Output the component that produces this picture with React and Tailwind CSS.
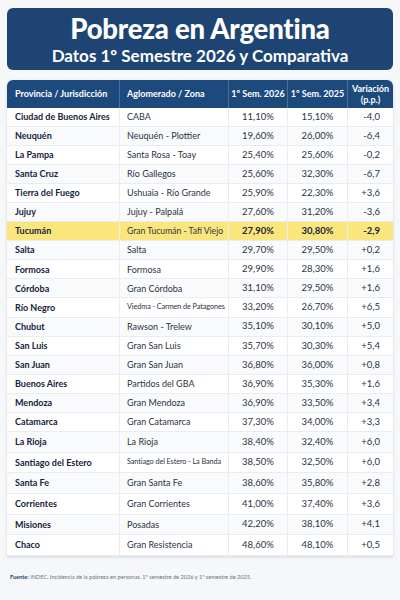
const rows = [
  ["Ciudad de Buenos Aires", "CABA", "11,10%", "15,10%", "-4,0"],
  ["Neuquén", "Neuquén - Plottier", "19,60%", "26,00%", "-6,4"],
  ["La Pampa", "Santa Rosa - Toay", "25,40%", "25,60%", "-0,2"],
  ["Santa Cruz", "Río Gallegos", "25,60%", "32,30%", "-6,7"],
  ["Tierra del Fuego", "Ushuaia - Río Grande", "25,90%", "22,30%", "+3,6"],
  ["Jujuy", "Jujuy - Palpalá", "27,60%", "31,20%", "-3,6"],
  ["Tucumán", "Gran Tucumán - Tafí Viejo", "27,90%", "30,80%", "-2,9", true],
  ["Salta", "Salta", "29,70%", "29,50%", "+0,2"],
  ["Formosa", "Formosa", "29,90%", "28,30%", "+1,6"],
  ["Córdoba", "Gran Córdoba", "31,10%", "29,50%", "+1,6"],
  ["Río Negro", "Viedma - Carmen de Patagones", "33,20%", "26,70%", "+6,5"],
  ["Chubut", "Rawson - Trelew", "35,10%", "30,10%", "+5,0"],
  ["San Luis", "Gran San Luis", "35,70%", "30,30%", "+5,4"],
  ["San Juan", "Gran San Juan", "36,80%", "36,00%", "+0,8"],
  ["Buenos Aires", "Partidos del GBA", "36,90%", "35,30%", "+1,6"],
  ["Mendoza", "Gran Mendoza", "36,90%", "33,50%", "+3,4"],
  ["Catamarca", "Gran Catamarca", "37,30%", "34,00%", "+3,3"],
  ["La Rioja", "La Rioja", "38,40%", "32,40%", "+6,0"],
  ["Santiago del Estero", "Santiago del Estero - La Banda", "38,50%", "32,50%", "+6,0"],
  ["Santa Fe", "Gran Santa Fe", "38,60%", "35,80%", "+2,8"],
  ["Corrientes", "Gran Corrientes", "41,00%", "37,40%", "+3,6"],
  ["Misiones", "Posadas", "42,20%", "38,10%", "+4,1"],
  ["Chaco", "Gran Resistencia", "48,60%", "48,10%", "+0,5"],
];

const cols = "grid grid-cols-[112px_109px_59px_60px_46px]";

function Row({ r, i }) {
  const hi = r[5];
  const bg = hi ? "bg-[#fbe67e]" : i % 2 ? "bg-[#f9fafc]" : "bg-white";
  // rows get a little taller towards the bottom, as in the picture
  const h = i < 5 ? "h-[19px]" : i < 17 ? "h-[19.1px]" : "h-[20.6px]";
  const cell = `flex items-center ${h} border-b border-[#e9edf2]`;
  const strong = hi ? "font-bold text-[#15233b]" : "";
  const zone = r[1].length > 26 ? "text-[7.3px] tracking-[-0.1px]" : r[1].length > 22 ? "text-[8.6px]" : "text-[9px]";
  return (
    <div className={`${cols} ${bg} text-[9.5px] text-[#2b3442]`}>
      <div className={`${cell} pl-2 font-bold text-[9px] text-[#15233b]`}>{r[0]}</div>
      <div className={`${cell} pl-[7px] border-l whitespace-nowrap ${zone}`}>{r[1]}</div>
      <div className={`${cell} justify-center border-l ${strong}`}>{r[2]}</div>
      <div className={`${cell} justify-center border-l ${strong}`}>{r[3]}</div>
      <div className={`${cell} justify-end pr-[13px] border-l ${strong}`}>{r[4]}</div>
    </div>
  );
}

export default function App() {
  return (
    <div className="w-[400px] h-[600px] bg-[#f6f7f9] px-[7px] pt-[8px] font-['Lato',sans-serif]">
      <div className="h-[62px] rounded-md bg-[#1e4474] flex flex-col items-center justify-center text-white">
        <h1 className="text-[27.5px] font-black leading-[32px] tracking-[-0.2px]">Pobreza en Argentina</h1>
        <p className="text-[17px] font-bold leading-[21px]">Datos 1º Semestre 2026 y Comparativa</p>
      </div>
      <div className="mt-[10px] rounded-t-md overflow-hidden shadow-[0_1px_3px_rgba(30,60,100,0.18)] bg-white">
        <div className={`${cols} h-[28px] bg-[#1d4a7c] text-white text-[9px] font-bold`}>
          <div className="flex items-center pl-2">Provincia / Jurisdicción</div>
          <div className="flex items-center pl-[7px] border-l border-[#4d6f98]">Aglomerado / Zona</div>
          <div className="flex items-center justify-center border-l border-[#4d6f98]">1º Sem. 2026</div>
          <div className="flex items-center justify-center border-l border-[#4d6f98]">1º Sem. 2025</div>
          <div className="flex flex-col items-center justify-center border-l border-[#4d6f98] leading-[11px]">
            <span>Variación</span>
            <span>(p.p.)</span>
          </div>
        </div>
        {rows.map((r, i) => (
          <Row key={r[0]} r={r} i={i} />
        ))}
      </div>
      <p className="mt-[17px] pl-[3px] text-[5.6px] text-[#6b7480]">
        <span className="font-bold text-[#1e4474]">Fuente:</span> INDEC. Incidencia de la pobreza en personas. 1º semestre de 2026 y 1º semestre de 2025.
      </p>
    </div>
  );
}
